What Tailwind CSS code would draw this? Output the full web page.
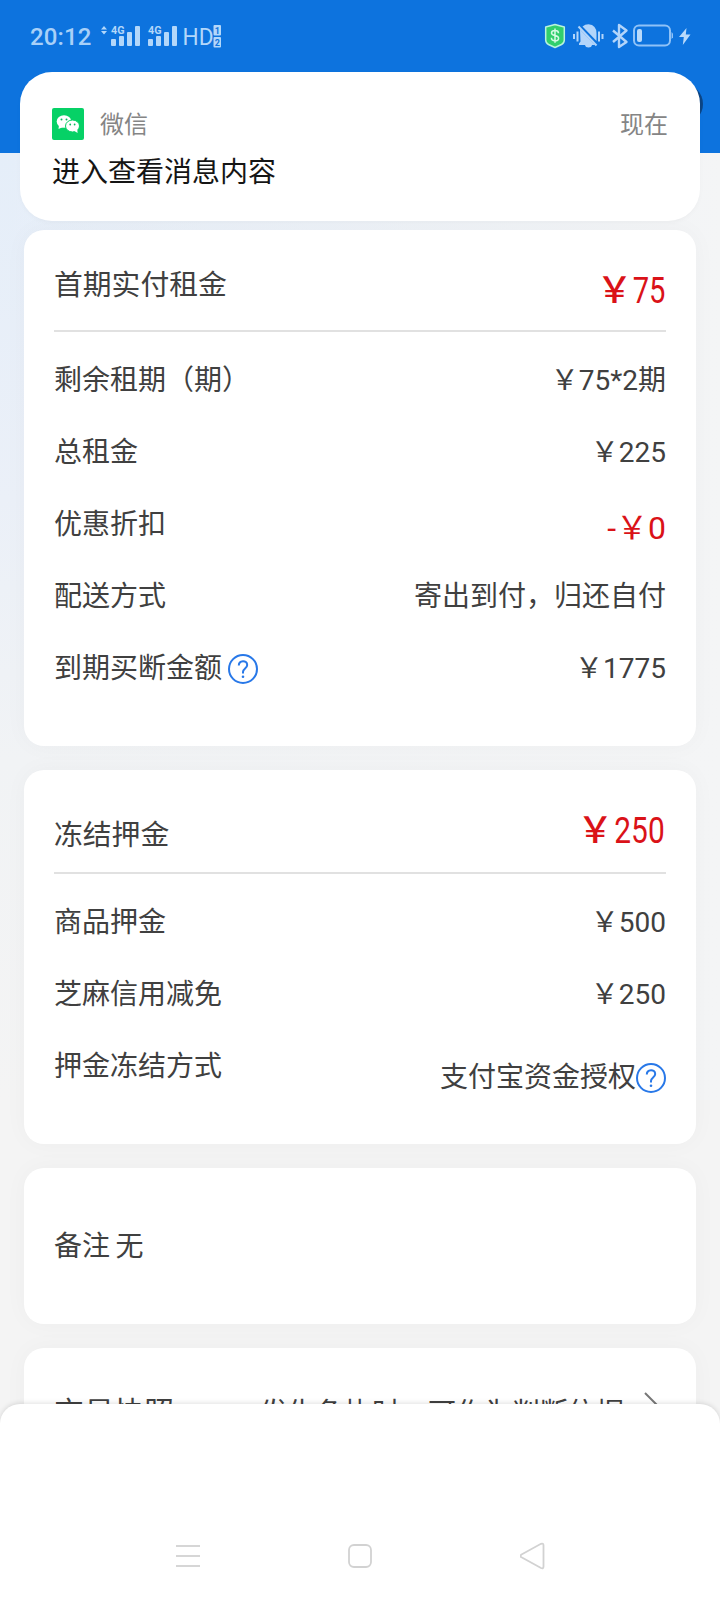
<!DOCTYPE html>
<html lang="zh-CN">
<head>
<meta charset="utf-8">
<meta name="viewport" content="width=device-width, initial-scale=1">
<title>订单详情</title>
<script src="https://cdn.jsdelivr.net/npm/@tailwindcss/browser@4"></script>
</head>
<body class="bg-[#f4f4f5] font-['Roboto','Noto_Sans_CJK_SC',sans-serif] text-[#404040]">
<div class="relative flex h-[1600px] w-[720px] flex-col overflow-hidden bg-[linear-gradient(to_bottom,#e5eef9_153px,#ebf0f8_500px,#f1f3f5_760px,#f4f4f4_1100px)]">
  <!-- Pale fade towards the right edge -->
  <div class="absolute inset-x-0 top-[153px] h-[947px] bg-linear-to-r from-transparent to-[#f4f5f6]"></div>

  <!-- Status bar -->
  <header class="flex h-[153px] shrink-0 items-start justify-between bg-[#0d73de] pl-[30px] pr-[28px] text-[#b3d7fa]">
    <div class="flex h-[72px] items-center">
      <span class="w-[62px] pt-px text-[24px] font-medium leading-[72px] tracking-[0.1px] text-[#a8d0f8]">20:12</span>
      <svg class="ml-[8px] h-[72px] w-[126px]" viewBox="100 0 126 72" fill="currentColor">
        <path d="M101 29.500 L104 26 L107 29.500Z M101 31 H107 L104 34.500Z"/>
        <text x="111" y="34" font-size="10.500" font-weight="700" textLength="13.500" lengthAdjust="spacingAndGlyphs">4G</text>
        <rect x="111" y="39" width="5" height="7" rx="1"/><rect x="119" y="36" width="5" height="10" rx="1"/><rect x="127" y="32" width="5" height="14" rx="1"/><rect x="135" y="26" width="5" height="20" rx="1"/>
        <text x="148" y="34" font-size="10.500" font-weight="700" textLength="13.500" lengthAdjust="spacingAndGlyphs">4G</text>
        <rect x="148" y="39" width="5" height="7" rx="1"/><rect x="156" y="36" width="5" height="10" rx="1"/><rect x="164" y="32" width="5" height="14" rx="1"/><rect x="172" y="26" width="5" height="20" rx="1"/>
        <text x="182.500" y="45" font-size="24.500" textLength="31" lengthAdjust="spacingAndGlyphs">HD</text>
        <rect x="213.500" y="25" width="7.500" height="10.500" rx="1"/><rect x="213.500" y="37" width="7.500" height="10.500" rx="1"/>
        <text x="214.800" y="33.800" font-size="9" font-weight="700" fill="#0d73de">1</text>
        <text x="214.800" y="45.800" font-size="9" font-weight="700" fill="#0d73de">2</text>
      </svg>
    </div>
    <svg class="h-[72px] w-[148px]" viewBox="544 0 148 72" fill="none">
      <path d="M555 24.500 L564.300 27 V40 Q564.300 43 561.500 44.500 L555 47.500 L548.500 44.500 Q545.700 43 545.700 40 V27Z" fill="#32cf6c" stroke="#b8f3dc" stroke-width="1.500" stroke-linejoin="round"/>
      <path d="M558.500 33.200 C558.500 31 556.800 30.500 555 30.500 C553 30.500 551.500 31.500 551.500 33 C551.500 36.500 558.600 34.300 558.600 38.200 C558.600 40 557 40.800 555 40.800 C553 40.800 551.400 40 551.400 37.800 M555 28.500 V42.800" stroke="#d6fae4" stroke-width="1.500"/>
      <g fill="#b3d5fa">
        <path d="M582.500 26.500 Q585 24.300 588.500 24.300 Q596.500 25 596.500 33.500 V41Z"/>
        <path d="M580 29.500 L595 45 H592 Q591.500 47.500 588.500 47.500 Q585.500 47.500 585 45 H579 V43.500 L580.500 41.500Z"/>
        <path d="M578.500 26.500 L596.500 45.500" stroke="#b3d5fa" stroke-width="2"/>
      </g>
      <path d="M574 34 V39 M577.500 31.500 V41.500 M599 31.500 V41.500 M602.500 34 V39" stroke="#b3d5fa" stroke-width="2"/>
      <path d="M613 30.500 L626.500 42 L619 47 V25 L626.500 30.500 L613 42" stroke="#b3d5fa" stroke-width="2.400" stroke-linejoin="round"/>
      <rect x="634" y="25.500" width="36" height="20" rx="5" stroke="#8fc2f7" stroke-width="2"/>
      <rect x="637" y="29" width="5" height="13" rx="2" fill="#b9dafb"/>
      <path d="M671.500 32 V39 L673 37.500 V33.500Z" fill="#8fc2f7"/>
      <path d="M686.500 28 L679 37 H683.800 L682.800 45 L690.500 34.500 H685.800Z" fill="#b9dafb"/>
    </svg>
  </header>

  <!-- Order details -->
  <main class="relative mt-[77px] flex flex-col gap-[24px] px-[24px] text-[28px] leading-[40px]">
    <section class="h-[516px] rounded-[20px] bg-white px-[30px] shadow-[0_0_24px_rgba(0,0,0,0.03)]">
      <div class="flex h-[102px] items-start justify-between border-b-2 border-[#e1e1e1] text-[28.800px]">
        <span class="pt-[35px]">首期实付租金</span>
        <span class="flex pt-[41px] text-[36px] text-[#da1218]"><span class="font-medium">￥</span><span class="-ml-[8px] mr-px inline-block origin-right scale-x-[0.81]">75</span></span>
      </div>
      <div class="flex flex-col pt-[13px]">
        <div class="flex h-[72px] items-center justify-between"><span>剩余租期（期）</span><span>￥75*2期</span></div>
        <div class="flex h-[72px] items-center justify-between"><span>总租金</span><span>￥225</span></div>
        <div class="flex h-[72px] items-center justify-between"><span>优惠折扣</span><span class="pt-[6px] text-[32px] text-[#da1218]">-￥0</span></div>
        <div class="flex h-[72px] items-center justify-between"><span>配送方式</span><span>寄出到付，归还自付</span></div>
        <div class="flex h-[72px] items-center justify-between">
          <span class="flex items-center gap-[6px]">到期买断金额
            <svg class="size-[30px]" viewBox="0 0 30 30" fill="none" stroke="#2878e8" stroke-width="2"><circle cx="15" cy="15" r="14"/><path d="M10.800 11.500 C10.800 5.800 19.200 5.800 19.200 11 C19.200 14.500 15 14.500 15 18 V19.500"/><circle cx="15" cy="22.700" r="1.300" fill="#2878e8" stroke="none"/></svg>
          </span>
          <span>￥1775</span>
        </div>
      </div>
    </section>

    <section class="h-[374px] rounded-[20px] bg-white px-[30px] shadow-[0_0_24px_rgba(0,0,0,0.03)]">
      <div class="flex h-[104px] items-start justify-between border-b-2 border-[#e1e1e1] text-[28.800px]">
        <span class="pt-[45px]">冻结押金</span>
        <span class="flex pt-[41px] text-[36px] text-[#da1218]"><span class="font-medium">￥</span><span class="-ml-[9px] mr-px inline-block origin-right scale-x-[0.83]">250</span></span>
      </div>
      <div class="flex flex-col pt-[13px]">
        <div class="flex h-[72px] items-center justify-between"><span>商品押金</span><span>￥500</span></div>
        <div class="flex h-[72px] items-center justify-between"><span>芝麻信用减免</span><span>￥250</span></div>
        <div class="flex h-[72px] items-center justify-between">
          <span>押金冻结方式</span>
          <span class="flex items-center pt-[22px]">支付宝资金授权
            <svg class="size-[30px]" viewBox="0 0 30 30" fill="none" stroke="#2878e8" stroke-width="2"><circle cx="15" cy="15" r="14"/><path d="M10.800 11.500 C10.800 5.800 19.200 5.800 19.200 11 C19.200 14.500 15 14.500 15 18 V19.500"/><circle cx="15" cy="22.700" r="1.300" fill="#2878e8" stroke="none"/></svg>
          </span>
        </div>
      </div>
    </section>

    <section class="flex h-[156px] items-center rounded-[20px] bg-white px-[30px] pt-[2px] shadow-[0_0_24px_rgba(0,0,0,0.03)]">
      <span class="[word-spacing:-1.5px]">备注 无</span>
    </section>

    <section class="flex h-[130px] items-start justify-between rounded-[20px] bg-white px-[30px] pt-[45px] shadow-[0_0_24px_rgba(0,0,0,0.03)]">
      <span class="text-[30px]">交易快照</span>
      <span class="flex gap-[18px] pt-px">发生争执时，可作为判断依据
        <svg class="-mt-[2px] ml-[2px] h-[28px] w-[22px]" viewBox="0 0 22 28" fill="none" stroke="#777" stroke-width="2"><path d="M1 1 L14 14 L1 27"/></svg>
      </span>
    </section>
  </main>

  <!-- Incoming notification, over the page -->
  <div class="absolute left-[663px] top-[84px] size-[40px] rounded-full bg-[#0c4585]"></div>
  <aside class="absolute left-[20px] top-[72px] flex h-[149px] w-[680px] flex-col rounded-[32px] bg-white px-[32px] pt-[32px] shadow-[0_2px_6px_-2px_rgba(0,0,0,0.05)]">
    <div class="flex h-[40px] items-center justify-between text-[24px] leading-[40px] text-[#858585]">
      <span class="flex items-center gap-[16px]">
        <svg class="size-[32px]" viewBox="0 0 32 32"><rect width="32" height="32" rx="2" fill="#06d166"/><ellipse cx="12" cy="13.500" rx="7.300" ry="6.300" fill="#fff"/><path d="M7 17 L6.500 21 L11 19Z" fill="#fff"/><ellipse cx="20.500" cy="18" rx="7" ry="6" fill="#fff" stroke="#06d166" stroke-width="1"/><path d="M22 22.800 L25.600 25 L25.200 21Z" fill="#fff"/><g fill="#06b95c"><circle cx="9.500" cy="11.500" r="1"/><circle cx="14.500" cy="11.500" r="1"/><circle cx="18.200" cy="16.500" r=".9"/><circle cx="22.600" cy="16.500" r=".9"/></g></svg>
        <span class="pt-[2px]">微信</span>
      </span>
      <span class="pt-[2px]">现在</span>
    </div>
    <div class="mt-[9px] text-[28px] leading-[40px] text-[#151515]">进入查看消息内容</div>
  </aside>

  <!-- Bottom sheet with system navigation -->
  <footer class="absolute inset-x-0 bottom-0 flex h-[196px] flex-col justify-end rounded-t-[20px] bg-white shadow-[0_-1px_5px_rgba(0,0,0,0.12)]">
    <nav class="flex h-[88px] items-start justify-between pl-[176px] pr-[174px] pt-[30px]">
      <svg class="h-[28px] w-[24px]" viewBox="0 0 24 28" stroke="#d6d6d6" stroke-width="2"><path d="M0 4 H24 M0 14 H24 M0 24 H24"/></svg>
      <svg class="h-[28px] w-[24px]" viewBox="0 0 24 28" fill="none" stroke="#d2d2d2" stroke-width="1.800"><rect x="1" y="3" width="22" height="22" rx="5"/></svg>
      <svg class="h-[28px] w-[26px]" viewBox="2 0 26 28" fill="none" stroke="#d2d2d2" stroke-width="1.800"><path d="M3.500 12.500 L23 1.800 Q25.500 1 25.500 3.500 V24.500 Q25.500 27 23 26 L3.500 15.300 Q1.500 14 3.500 12.500Z"/></svg>
    </nav>
  </footer>
</div>
</body>
</html>
